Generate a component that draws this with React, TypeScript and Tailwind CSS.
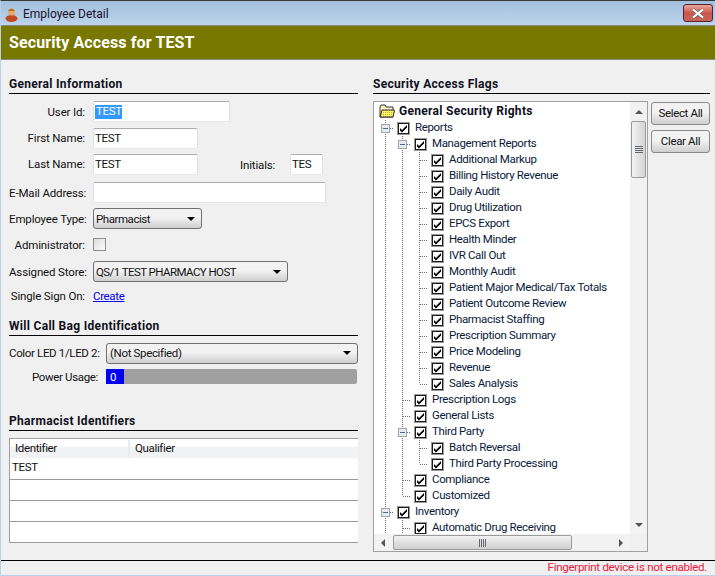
import React from "react";

const font = "font-['Roboto','Noto_Sans',sans-serif]";

type Guide = "line" | "tee" | "elbow" | "minus";

const TreeGuide = ({ kind }: { kind: Guide }) => {
  const dots = "#6f6f6f";
  return (
    <svg width="17" height="16" viewBox="0 0 17 16" className="shrink-0">
      {kind !== "elbow" && (
        <line x1="8.5" y1="0" x2="8.5" y2="16" stroke={dots} strokeDasharray="1 1" />
      )}
      {kind === "elbow" && (
        <line x1="8.5" y1="0" x2="8.5" y2="8" stroke={dots} strokeDasharray="1 1" />
      )}
      {kind !== "line" && (
        <line x1="9" y1="8.5" x2="17" y2="8.5" stroke={dots} strokeDasharray="1 1" />
      )}
      {kind === "minus" && (
        <g>
          <rect x="4.5" y="4.5" width="8" height="8" fill="#e8ecf1" stroke="#98a2ae" />
          <line x1="6" y1="8.5" x2="11" y2="8.5" stroke="#4a6a9a" />
        </g>
      )}
    </svg>
  );
};

const TreeCheck = () => (
  <svg width="13" height="13" viewBox="0 0 13 13" className="shrink-0">
    <rect x="0.5" y="0.5" width="12" height="12" fill="#fff" stroke="#9a9a9a" />
    <rect x="1.5" y="1.5" width="10" height="10" fill="#fff" stroke="#1c1c1c" />
    <path d="M3 6 L5 8 L10 3 L10 5.6 L5 10.6 L3 8.6 Z" fill="#000" />
  </svg>
);

const Row = ({ guides, label }: { guides: Guide[]; label: string }) => (
  <div className="flex h-4 items-center">
    {guides.map((g, i) => (
      <TreeGuide key={i} kind={g} />
    ))}
    <span className="ml-[3px]">
      <TreeCheck />
    </span>
    <span className="ml-[5px] whitespace-nowrap text-[#0a1a3a]">{label}</span>
  </div>
);

const treeRows: { guides: Guide[]; label: string }[] = [
  { guides: ["minus"], label: "Reports" },
  { guides: ["line", "minus"], label: "Management Reports" },
  { guides: ["line", "line", "tee"], label: "Additional Markup" },
  { guides: ["line", "line", "tee"], label: "Billing History Revenue" },
  { guides: ["line", "line", "tee"], label: "Daily Audit" },
  { guides: ["line", "line", "tee"], label: "Drug Utilization" },
  { guides: ["line", "line", "tee"], label: "EPCS Export" },
  { guides: ["line", "line", "tee"], label: "Health Minder" },
  { guides: ["line", "line", "tee"], label: "IVR Call Out" },
  { guides: ["line", "line", "tee"], label: "Monthly Audit" },
  { guides: ["line", "line", "tee"], label: "Patient Major Medical/Tax Totals" },
  { guides: ["line", "line", "tee"], label: "Patient Outcome Review" },
  { guides: ["line", "line", "tee"], label: "Pharmacist Staffing" },
  { guides: ["line", "line", "tee"], label: "Prescription Summary" },
  { guides: ["line", "line", "tee"], label: "Price Modeling" },
  { guides: ["line", "line", "tee"], label: "Revenue" },
  { guides: ["line", "line", "elbow"], label: "Sales Analysis" },
  { guides: ["line", "tee"], label: "Prescription Logs" },
  { guides: ["line", "tee"], label: "General Lists" },
  { guides: ["line", "minus"], label: "Third Party" },
  { guides: ["line", "line", "tee"], label: "Batch Reversal" },
  { guides: ["line", "line", "elbow"], label: "Third Party Processing" },
  { guides: ["line", "tee"], label: "Compliance" },
  { guides: ["line", "elbow"], label: "Customized" },
  { guides: ["minus"], label: "Inventory" },
  { guides: ["line", "tee"], label: "Automatic Drug Receiving" },
];

const Heading = ({ children, className }: { children: React.ReactNode; className: string }) => (
  <div className={`h-[18px] border-b border-black text-[12px] leading-[16px] font-bold tracking-[0.3px] text-[#10101c] ${className}`}>
    {children}
  </div>
);

const FormRow = ({
  label,
  className,
  labelClass = "pt-[1px]",
  children,
}: {
  label: string;
  className: string;
  labelClass?: string;
  children: React.ReactNode;
}) => (
  <div className={`flex h-[21px] items-center ${className}`}>
    <span className={`w-[76px] shrink-0 text-right tracking-[-0.15px] whitespace-nowrap ${labelClass}`}>{label}</span>
    <div className="ml-[8px] flex items-center">{children}</div>
  </div>
);

const Input = ({ value, className }: { value?: React.ReactNode; className: string }) => (
  <div className={`flex h-[21px] items-center rounded-[2px] border border-t-[#abadb3] border-r-[#dbdfe6] border-b-[#e3e9ef] border-l-[#e2e3ea] bg-white pt-[1px] pl-[1px] ${className}`}>
    {value}
  </div>
);

const Select = ({ value, className }: { value: string; className: string }) => (
  <div className={`flex h-[21px] items-center justify-between rounded-[3px] border border-[#707070] bg-linear-to-b from-[#f2f2f2] from-45% to-[#cfcfcf] to-100% pr-[6px] pl-[2px] ${className}`}>
    <span className="pt-[2px] whitespace-nowrap">{value}</span>
    <span className="h-0 w-0 border-x-[4px] border-t-[4px] border-x-transparent border-t-black" />
  </div>
);

const WinButton = ({ label, className }: { label: string; className: string }) => (
  <div className={`flex h-[23px] w-[59px] items-center justify-center rounded-[3px] border border-[#8a8a8a] bg-linear-to-b from-[#f2f2f2] from-45% to-[#cfcfcf] to-100% ${className}`}>
    {label}
  </div>
);

const ThumbGrip = ({ vertical }: { vertical: boolean }) => (
  <svg width="8" height="8" viewBox="0 0 8 8">
    {[1, 3, 5, 7].map((p) =>
      vertical ? (
        <line key={p} x1="0" x2="8" y1={p - 0.5} y2={p - 0.5} stroke="#5f6670" />
      ) : (
        <line key={p} y1="0" y2="8" x1={p - 0.5} x2={p - 0.5} stroke="#5f6670" />
      ),
    )}
  </svg>
);

export default function App() {
  return (
    <div className={`flex h-[576px] w-[715px] flex-col overflow-hidden border-t border-b border-l border-t-[#3a3a3a] border-b-[#b9d1ea] border-l-[#b9d1ea] bg-[#f0f0f0] text-[11.5px] leading-none tracking-[-0.35px] text-[#111] ${font}`}>
      {/* title bar */}
      <div className="flex h-[24px] shrink-0 items-center bg-linear-to-b from-[#a4bfdc] to-[#bcd4ec] pr-[1px] pl-[4px]">
        <svg width="13" height="15" viewBox="0 0 13 15" className="mt-[2px] shrink-0">
          <ellipse cx="6.5" cy="11.5" rx="6" ry="3.5" fill="#c0481f" />
          <circle cx="6.5" cy="5" r="3.5" fill="#e8a86a" />
          <path d="M3 4 Q6.5 -0.5 10 4 Z" fill="#a8701f" />
        </svg>
        <span className="mt-[1px] ml-[5px] text-[12px] tracking-normal text-[#1a1028]">Employee Detail</span>
        <div className="mr-[1px] ml-auto flex h-[18px] w-[30px] items-center justify-center rounded-[3px] border border-[#5c1f2a] bg-linear-to-b from-[#e4a99e] via-[#c9564a] to-[#c8645a]">
          <svg width="14" height="11" viewBox="0 0 14 11">
            <path d="M2 1.5 L12 9.5 M12 1.5 L2 9.5" stroke="#6d6d6d" strokeWidth="3.4" />
            <path d="M2 1.5 L12 9.5 M12 1.5 L2 9.5" stroke="#fff" strokeWidth="2.2" />
          </svg>
        </div>
      </div>
      {/* olive banner */}
      <div className="flex h-[35px] shrink-0 items-center border-y border-[#8a8a80] bg-[#787800] pl-[8px] text-[16px] font-bold tracking-[0.12px] text-white">
        Security Access for TEST
      </div>

      <div className="flex h-[500px] shrink-0 pl-[8px]">
        {/* left column */}
        <div className="w-[349px] shrink-0">
          <Heading className="mt-[16px]">General Information</Heading>
          <FormRow label="User Id:" className="mt-[7px]" labelClass="pt-[2px]">
            <Input
              className="w-[137px] border-t-[#5d9bd1]"
              value={<span className="bg-[#3399ff] py-[1px] pl-[1px] text-white">TEST</span>}
            />
          </FormRow>
          <FormRow label="First Name:" className="mt-[6px]">
            <Input className="w-[105px]" value="TEST" />
          </FormRow>
          <FormRow label="Last Name:" className="mt-[5px]">
            <Input className="w-[105px]" value="TEST" />
            <span className="ml-[42px] w-[40px] pt-[2px] tracking-[-0.15px]">Initials:</span>
            <Input className="ml-[10px] w-[33px]" value="TES" />
          </FormRow>
          <FormRow label="E-Mail Address:" className="mt-[7px]" labelClass="pt-[2px]">
            <Input className="w-[233px]" />
          </FormRow>
          <FormRow label="Employee Type:" className="mt-[5px]" labelClass="pt-[2px]">
            <Select className="w-[109px] tracking-[-0.45px]" value="Pharmacist" />
          </FormRow>
          <FormRow label="Administrator:" className="mt-[5px]" labelClass="pt-[2px]">
            <div className="h-[13px] w-[13px] border border-[#8e8f8f] bg-linear-to-br from-[#dcdcdc] to-[#fbfbfb]" />
          </FormRow>
          <FormRow label="Assigned Store:" className="mt-[6px]" labelClass="pt-[2px]">
            <Select className="w-[195px] tracking-[-0.57px]" value="QS/1 TEST PHARMACY HOST" />
          </FormRow>
          <FormRow label="Single Sign On:" className="mt-[4px]">
            <span className="pt-[1px] text-[#0000ee] underline">Create</span>
          </FormRow>

          <Heading className="mt-[11px]">Will Call Bag Identification</Heading>
          <div className="mt-[7px] flex h-[20px] items-center">
            <span className="w-[89px] shrink-0 pt-[2px] text-right whitespace-nowrap">Color LED 1/LED 2:</span>
            <Select className="ml-[8px] h-[20px] w-[253px] pl-[3px]" value="(Not Specified)" />
          </div>
          <div className="mt-[6px] flex h-[15px] items-center">
            <span className="w-[89px] shrink-0 pt-[3px] text-right">Power Usage:</span>
            <div className="ml-[8px] flex h-[15px] w-[251px] overflow-hidden rounded-r-[2px] bg-[#a0a0a0]">
              <div className="w-[18px] bg-[#0000f0] pl-[4px] leading-[17px] text-white">0</div>
            </div>
          </div>

          <Heading className="mt-[29px]">Pharmacist Identifiers</Heading>
          <div className="mt-[7px] w-[349px] border-t border-l border-[#a0a0a0] bg-white">
            <div className="flex h-[19px] items-center bg-linear-to-b from-[#ffffff] from-40% to-[#f1f2f4] to-40% pt-[1px]">
              <div className="flex h-full w-[120px] items-center border-r-2 border-[#e6ebf2] pl-[5px]">Identifier</div>
              <div className="pl-[5px]">Qualifier</div>
            </div>
            <div className="flex h-[22px] items-center border-b border-[#9a9a9a] pb-[1px] pl-[2px]">TEST</div>
            <div className="h-[21px] border-b border-[#9a9a9a]" />
            <div className="h-[21px] border-b border-[#9a9a9a]" />
            <div className="h-[21px] border-b border-[#9a9a9a]" />
          </div>
        </div>

        {/* right column */}
        <div className="ml-[15px] w-[337px] shrink-0">
          <Heading className="mt-[16px]">Security Access Flags</Heading>
          <div className="mt-[7px] flex items-start">
            <div className="grid h-[451px] w-[277px] grid-cols-[1fr_17px] grid-rows-[1fr_17px] border border-[#a0a0a0] bg-white">
              <div className="overflow-hidden pl-[3px]">
                <div className="flex h-[18px] items-center pl-[2px]">
                  <svg width="16" height="14" viewBox="0 0 16 14" className="shrink-0">
                    <defs>
                      <pattern id="dither" width="2" height="2" patternUnits="userSpaceOnUse">
                        <rect width="2" height="2" fill="#fff46a" />
                        <rect width="1" height="1" fill="#c8b020" />
                      </pattern>
                    </defs>
                    <path d="M1 3 L1 13 L14 13 L14 3 L7 3 L6 1 L2 1 Z" fill="#f7f0c8" stroke="#333" />
                    <path d="M3 6 L15.5 6 L14 13 L1 13 Z" fill="url(#dither)" stroke="#333" />
                  </svg>
                  <span className="ml-[4px] text-[12px] font-bold tracking-[0.3px] text-[#10101c]">General Security Rights</span>
                </div>
                <div>
                  {treeRows.map((r, i) => (
                    <Row key={i} guides={r.guides} label={r.label} />
                  ))}
                </div>
              </div>
              {/* vertical scrollbar */}
              <div className="flex flex-col items-center bg-[#f2f2f2]">
                <span className="mt-[8px] h-0 w-0 border-x-[4px] border-b-[4px] border-x-transparent border-b-[#555]" />
                <div className="mt-[7px] flex h-[57px] w-[15px] items-center justify-center rounded-[2px] border border-[#9a9a9a] bg-linear-to-r from-[#f2f2f2] to-[#d4d4d4]">
                  <ThumbGrip vertical />
                </div>
                <span className="mt-auto mb-[7px] h-0 w-0 border-x-[4px] border-t-[4px] border-x-transparent border-t-[#555]" />
              </div>
              {/* horizontal scrollbar */}
              <div className="flex items-center bg-[#f2f2f2]">
                <span className="ml-[7px] h-0 w-0 border-y-[4px] border-r-[4px] border-y-transparent border-r-[#555]" />
                <div className="ml-[8px] flex h-[15px] w-[179px] items-center justify-center rounded-[2px] border border-[#9a9a9a] bg-linear-to-b from-[#f2f2f2] to-[#d0d0d0]">
                  <ThumbGrip vertical={false} />
                </div>
                <span className="mr-[7px] ml-auto h-0 w-0 border-y-[4px] border-l-[4px] border-y-transparent border-l-[#555]" />
              </div>
              <div className="bg-[#f0f0f0]" />
            </div>
            <div className="ml-[3px] flex flex-col">
              <WinButton label="Select All" className="mt-[1px]" />
              <WinButton label="Clear All" className="mt-[5px]" />
            </div>
          </div>
        </div>
      </div>

      {/* status bar */}
      <div className="flex flex-1 items-center justify-end border-t border-black pr-[8px] pb-[1px] tracking-[-0.27px] text-[#f0143c]">
        Fingerprint device is not enabled.
      </div>
    </div>
  );
}
